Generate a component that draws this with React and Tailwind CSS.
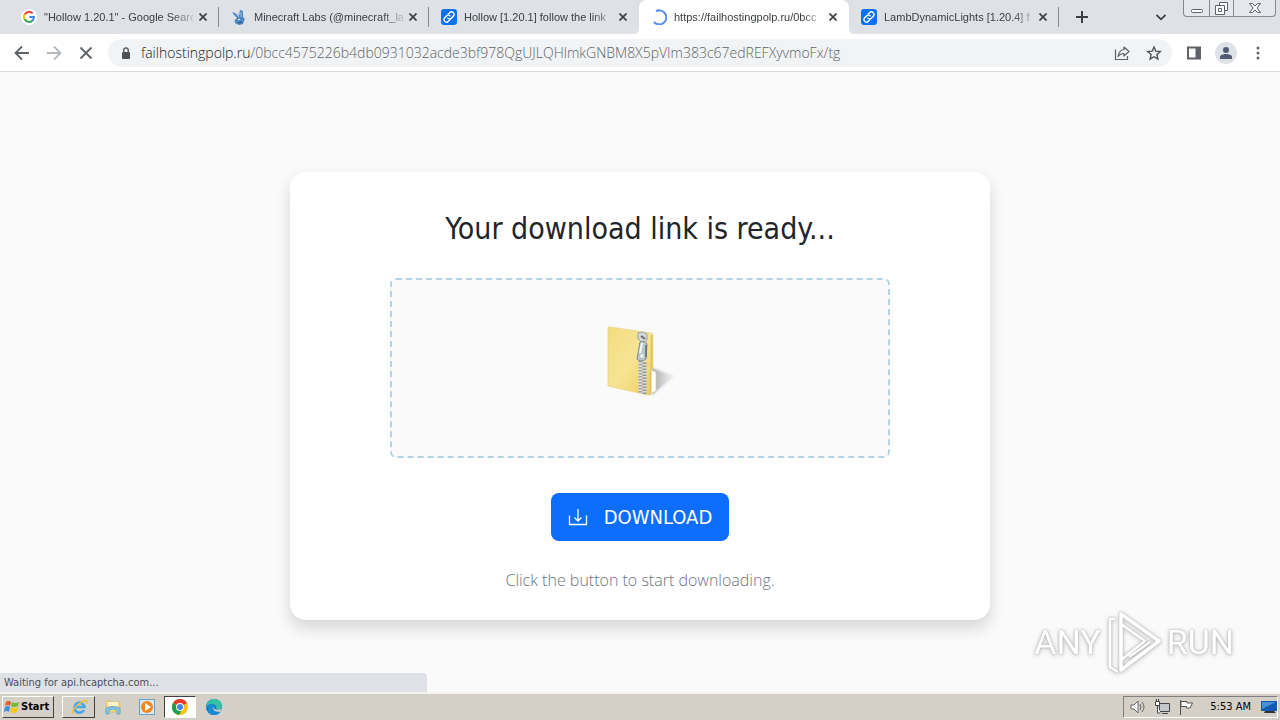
import React from "react";

function Svg({ size = 16, box = 16, children, className = "" }) {
  return (
    <svg width={size} height={size} viewBox={`0 0 ${box} ${box}`} fill="none" aria-hidden="true" className={`shrink-0 ${className}`}>
      {children}
    </svg>
  );
}

function GoogleIcon() {
  return (
    <Svg box={48}>
      <circle cx="24" cy="24" r="24" fill="#fff" />
      <path d="M11 17a15 15 0 0 1 24-4" stroke="#ea4335" strokeWidth="6" />
      <path d="M11 16a15 15 0 0 0 0 16" stroke="#fbbc05" strokeWidth="6" />
      <path d="M11 31a15 15 0 0 0 23 4" stroke="#34a853" strokeWidth="6" />
      <path d="M25 24h14c0 5-2 9-6 12" stroke="#4285f4" strokeWidth="6" />
    </Svg>
  );
}

function RabbitIcon() {
  return (
    <Svg>
      <path d="M1 3l5 2 2 2 1-6 3 1v6c2 1 2 3 1 4l-1 3-4 1-4-2c-1-2 0-4 2-5L3 6z" fill="#4c86c0" />
      <path d="M5 5l3 3M10 3l0 5" stroke="#9bc2e6" />
      <path d="M7 11l2-1" stroke="#fff" />
      <path d="M7 14l4-1" stroke="#27517f" />
    </Svg>
  );
}

function LinkIcon() {
  return (
    <Svg>
      <rect width="16" height="16" rx="3" fill="#0d72f2" />
      <g stroke="#fff" strokeWidth="1.3" strokeLinecap="round">
        <path d="M7 5.200l1.600-1.500a2.500 2.500 0 0 1 3.700 3.500L10.300 9.300a2.400 2.400 0 0 1-3.500-.2" />
        <path d="M9 10.800l-1.600 1.500a2.500 2.500 0 0 1-3.700-3.500L5.700 6.700a2.400 2.400 0 0 1 3.500.2" />
      </g>
    </Svg>
  );
}

function Spinner() {
  return (
    <Svg>
      <path d="M5 2.200A7 7 0 1 1 3 13" stroke="#5b8def" strokeWidth="2" />
    </Svg>
  );
}

function CloseIcon() {
  return (
    <Svg size={8} box={8}>
      <path d="M.5.500l7 7M7.500.500l-7 7" stroke="#3c4043" strokeWidth="1.700" />
    </Svg>
  );
}

const tabs = [
  { icon: GoogleIcon, title: '"Hollow 1.20.1" - Google Search', divider: true },
  { icon: RabbitIcon, title: "Minecraft Labs (@minecraft_la", divider: true },
  { icon: LinkIcon, title: "Hollow [1.20.1] follow the link" },
  { icon: Spinner, title: "https://failhostingpolp.ru/0bcc", active: true },
  { icon: LinkIcon, title: "LambDynamicLights [1.20.4] f", divider: true },
];

function Tab({ icon: Icon, title, active, divider }) {
  return (
    <div
      className={`relative flex h-[34px] min-w-0 max-w-[210px] flex-1 items-center pl-3 ${active ? "rounded-t-lg bg-white" : ""}`}
    >
      {active && (
        <>
          <Svg size={6} box={6} className="absolute bottom-0 right-full"><path d="M6 0v6H0q6 0 6-6z" fill="#fff" /></Svg>
          <Svg size={6} box={6} className="absolute bottom-0 left-full"><path d="M0 0v6h6q-6 0-6-6z" fill="#fff" /></Svg>
        </>
      )}
      <button type="button" role="tab" aria-selected={!!active} className="flex min-w-0 flex-1 items-center gap-[7px] text-left">
        <Icon />
        <span className="min-w-0 flex-1 overflow-hidden whitespace-nowrap font-['Liberation_Sans',sans-serif] text-[11px] leading-4 text-[#3c4043] [mask-image:linear-gradient(to_right,#000_86%,rgba(0,0,0,0.2))]">
          {title}
        </span>
      </button>
      <button type="button" aria-label={`Close ${title}`} className="ml-1 mr-[9px] p-[2px]">
        <CloseIcon />
      </button>
      <span className={`h-5 w-px ${divider ? "bg-[#85898f]" : ""}`} />
    </div>
  );
}

function WindowControls() {
  return (
    <div className="mr-1 flex h-[17px] self-start rounded-b border border-t-0 border-[#858990] bg-[#e4e7ec] text-[#5c626b]">
      <button type="button" aria-label="Minimize" className="flex w-[25px] items-center justify-center">
        <Svg size={12} box={12}><rect x=".5" y="7.500" width="11" height="3" rx="1" fill="#fff" stroke="currentColor" /></Svg>
      </button>
      <button type="button" aria-label="Restore" className="flex w-[25px] items-center justify-center border-x border-[#858990]">
        <Svg size={13} box={13}>
          <path d="M4.500.500h8v8h-8z" fill="#fff" stroke="currentColor" />
          <path d="M.5 3.500h9v9h-9z" fill="#fff" stroke="currentColor" />
          <path d="M3.500 6.500h3v3h-3z" stroke="currentColor" />
        </Svg>
      </button>
      <button type="button" aria-label="Close window" className="flex w-[41px] items-center justify-center">
        <Svg size={12} box={12}><path d="M.5 1.500h3L6 4l2.500-2.500h3L8 6l3.500 4.500h-3L6 8l-2.500 2.500h-3L4 6z" fill="#fff" stroke="currentColor" /></Svg>
      </button>
    </div>
  );
}

function TabStrip() {
  return (
    <header className="flex h-[34px] items-center bg-[#dee1e6] pl-[9px]">
      <div role="tablist" className="flex min-w-0 flex-1 items-center">
        {tabs.map((t) => (
          <Tab key={t.title} {...t} />
        ))}
        <button type="button" aria-label="New tab" className="ml-3 p-1">
          <Svg size={14} box={14}><path d="M7 1v12M1 7h12" stroke="#3c4043" strokeWidth="2" /></Svg>
        </button>
      </div>
      <button type="button" aria-label="Search tabs" className="mr-[17px]">
        <Svg size={10} box={10}><path d="M.5 3L5 7.300 9.500 3" stroke="#3c4043" strokeWidth="1.800" /></Svg>
      </button>
      <WindowControls />
    </header>
  );
}

function Toolbar() {
  return (
    <nav className="flex h-[38px] items-center border-b border-[#d9dbde] bg-white px-[14px] text-[#5f6368]">
      <div className="flex gap-4">
        <button type="button" aria-label="Back"><Svg><path d="M15 8H2M8 1.500L1.500 8 8 14.500" stroke="#5f6368" strokeWidth="1.800" /></Svg></button>
        <button type="button" aria-label="Forward"><Svg><path d="M1 8h13M8 1.500L14.500 8 8 14.500" stroke="#b5b8bb" strokeWidth="1.800" /></Svg></button>
        <button type="button" aria-label="Stop"><Svg><path d="M2.500 2.500l11 11M13.500 2.500l-11 11" stroke="#5f6368" strokeWidth="1.800" /></Svg></button>
      </div>
      <div className="ml-[14px] flex h-7 min-w-0 flex-1 items-center rounded-full bg-[#f1f3f4] pl-3 pr-[10px]">
        <Svg size={12} box={12}>
          <rect x="2" y="5" width="8" height="7" rx="1" fill="#4d5156" />
          <path d="M3.800 5V3a2.200 2.200 0 0 1 4.400 0v2" stroke="#4d5156" strokeWidth="1.300" />
        </Svg>
        <a href="#" aria-label="Address" className="ml-[9px] min-w-0 flex-1 overflow-hidden whitespace-nowrap font-['Open_Sans',sans-serif] text-[14px] font-light leading-5 text-[#5f6368]">
          <span className="text-[#202124]">failhostingpolp.ru</span>/0bcc4575226b4db0931032acde3bf978QgUJLQHlmkGNBM8X5pVIm383c67edREFXyvmoFx/tg
        </a>
        <button type="button" aria-label="Share"><Svg><path d="M1.500 4.500v10h12V11M10 2l5 4.500L10 11V8.500c-3 0-4.500.800-6 3C4.500 8 6 5 10 4.500z" stroke="#5f6368" strokeWidth="1.200" strokeLinejoin="round" /></Svg></button>
        <button type="button" aria-label="Bookmark" className="ml-4"><Svg><path d="M8 2l1.800 4.200 4.500.400-3.400 3 1 4.400L8 11.700 4.100 14l1-4.400-3.400-3 4.500-.4z" stroke="#4d5156" strokeWidth="1.400" /></Svg></button>
      </div>
      <button type="button" aria-label="Side panel" className="ml-[14px]"><Svg><path d="M2 2.500h12v11H2z" stroke="#5f6368" strokeWidth="2" /><path d="M9.500 3H14v10.500H9.500z" fill="#5f6368" /></Svg></button>
      <button type="button" aria-label="Profile" className="ml-[13px]">
        <Svg size={22} box={22}><circle cx="11" cy="11" r="11" fill="#dee1e6" /><circle cx="11" cy="8" r="3" fill="#525b73" /><path d="M5 17v-2c0-4 12-4 12 0v2z" fill="#525b73" /></Svg>
      </button>
      <button type="button" aria-label="Menu" className="ml-[13px]"><Svg><g fill="#5f6368"><circle cx="8" cy="3" r="1.500" /><circle cx="8" cy="8" r="1.500" /><circle cx="8" cy="13" r="1.500" /></g></Svg></button>
    </nav>
  );
}

function ZipFolder() {
  return (
    <svg width="72" height="74" viewBox="0 0 72 74" aria-label="Zip archive" role="img">
      <defs>
        <linearGradient id="folder" x1="0" y1="0" x2="1" y2="1">
          <stop offset="0" stopColor="#f3dc80" /><stop offset=".5" stopColor="#f7e493" /><stop offset="1" stopColor="#ebcd60" />
        </linearGradient>
        <linearGradient id="shade" x1="0" y1="0" x2="1" y2="0">
          <stop offset="0" stopColor="#888" stopOpacity=".8" /><stop offset="1" stopColor="#ddd" stopOpacity=".3" />
        </linearGradient>
        <filter id="soft"><feGaussianBlur stdDeviation="1" /></filter>
      </defs>
      <path d="M48 43l23 8-16 13-7 6z" fill="url(#shade)" filter="url(#soft)" />
      <path d="M46 45l6 2v19l-6 3z" fill="#fff" stroke="#d8d2ae" strokeWidth=".7" />
      <path d="M4 3q0-1 2-1l41 6q2 0 2 2v33l-2 2v23q0 3-3 2L4 61z" fill="url(#folder)" stroke="#e6d080" strokeWidth=".7" />
      <path d="M47.500 10v35M46.500 46v22" stroke="#dfbf50" strokeWidth="1.500" />
      <path d="M38.500 36v33" stroke="#e2dfd0" strokeWidth="8" />
      <path d="M36.500 36v32" stroke="#a3a6a8" strokeWidth="4" strokeDasharray="1.500 1.500" />
      <path d="M40.500 37.500v32" stroke="#92969a" strokeWidth="4" strokeDasharray="1.500 1.500" />
      <path d="M34 8l4-1 5 2v6l-4 3-5-4z" fill="#d2d7da" stroke="#9aa4a9" />
      <path d="M37 11l4 3" stroke="#667178" strokeWidth="2" />
      <path d="M36 17q5-2 7 2l-1 15q-5 4-9 0z" fill="#b9c5cc" stroke="#7f8e96" />
      <path d="M38 18l-2 10" stroke="#f5f9fb" strokeWidth="2" />
      <path d="M42 20v12" stroke="#5b6a72" strokeWidth="1.500" />
      <circle cx="38" cy="31" r="2" fill="#e8edef" />
    </svg>
  );
}

function Watermark() {
  return (
    <div aria-label="ANY.RUN" className="absolute bottom-[17px] right-[46px] flex items-center gap-1 font-['Roboto',sans-serif] text-[34px] leading-[66px] text-white [filter:drop-shadow(0_0_1px_#aaa)_drop-shadow(0_1px_2px_#ccc)]">
      <span>ANY</span>
      <svg width="58" height="64" viewBox="0 0 58 64" fill="none" aria-hidden="true">
        <path d="M16 4l38 27-38 29z" stroke="#fff" strokeWidth="3.500" strokeLinejoin="round" />
        <path d="M16 14l24 17-24 19zM10 9H5v48l8 5M24 47l21-15M22 54l24-17" stroke="#fff" strokeWidth="2.500" strokeLinejoin="round" />
      </svg>
      <span>RUN</span>
    </div>
  );
}

function Page() {
  return (
    <main className="relative flex flex-1 flex-col items-center bg-[#fafafa] px-4 pt-[100px] pb-[72px]">
      <section className="flex w-full max-w-[700px] flex-col items-center rounded-2xl bg-white px-4 pb-7 pt-[37px] shadow-[0_8px_16px_rgba(0,0,0,0.15)]">
        <h1 className="text-[30px] leading-[40px] text-[#212529]">Your download link is ready...</h1>
        <div className="mt-[29px] flex h-[180px] w-full max-w-[500px] items-start justify-center rounded-md border-2 border-dashed border-[#b5d4e3] bg-[#fafafa] pt-[45px]">
          <ZipFolder />
        </div>
        <button type="button" className="mt-[35px] flex h-12 items-center gap-4 rounded-lg bg-[#0d6efd] px-[17px] text-[20px] leading-[30px] text-white">
          <Svg size={20} box={20}><path d="M1.500 8.500v9h17v-9M10 2v12M6.500 10.500L10 14l3.500-3.500" stroke="#fff" strokeWidth="1.300" /></Svg>
          DOWNLOAD
        </button>
        <p className="mt-[27px] font-['Open_Sans',sans-serif] text-[16px] font-light leading-6 text-[#6c757d]">Click the button to start downloading.</p>
      </section>
      <Watermark />
      <div role="status" className="absolute bottom-0 left-0 h-[19px] w-1/3 rounded-tr bg-[#dee1e6] pl-1 text-[11px] leading-[20px] text-[#4b4f54]">
        Waiting for api.hcaptcha.com...
      </div>
    </main>
  );
}

function Taskbar() {
  const raised = "border border-b-[#404040] border-l-white border-r-[#404040] border-t-white";
  return (
    <footer className="flex h-7 items-center border-t-2 border-[#f4f2ee] bg-[#d4d0c8] px-[2px] text-[11px] text-black">
      <button type="button" className={`flex h-[22px] items-center gap-px pl-px pr-1 text-[11px] font-bold ${raised}`}>
        <Svg>
          <path d="M2 3q3-2 5 0L6 7Q4 5 1 7z" fill="#e65b26" /><path d="M8 3q3 2 7 0l-1 4q-4 2-7 0z" fill="#75b935" />
          <path d="M1 8q3-2 5 0l-1 5q-2-2-5 0z" fill="#3c91d8" /><path d="M7 8q3 2 7 0l-1 5q-4 2-7 0z" fill="#f5c522" />
        </Svg>
        Start
      </button>
      <div className="ml-2 flex h-[22px] items-center gap-px">
        <button type="button" aria-label="Internet Explorer" className={`flex h-[22px] w-[33px] items-center justify-center ${raised}`}>
          <Svg size={18} box={18}>
            <path d="M14 12A5 5 0 1 1 14.500 9H5" stroke="#46a9e6" strokeWidth="2.600" />
            <path d="M3 16C-1 13 14 0 17 3c.5 1 0 2-1 3" stroke="#efbd38" strokeWidth="1.500" />
          </Svg>
        </button>
        <button type="button" aria-label="Explorer" className="flex h-[22px] w-[33px] items-center justify-center">
          <Svg size={18} box={18}><path d="M2 3h5l1 1h8v10H2z" fill="#f2d98a" stroke="#dcbd68" /><path d="M4 4h10v4H4z" fill="#fff4c5" /><path d="M2 10q7-3 14 0v6h-3v-4q-4-2-8 0v4H2z" fill="#85c8e9" stroke="#65a9cb" /></Svg>
        </button>
        <button type="button" aria-label="Media Player" className="flex h-[22px] w-[33px] items-center justify-center">
          <Svg><rect x=".5" y=".5" width="15" height="15" fill="#d9e9f7" stroke="#6c9fc9" /><circle cx="8" cy="8" r="6" fill="#ed8a1c" /><path d="M6 4l6 4-6 4z" fill="#fff" /></Svg>
        </button>
        <button type="button" aria-label="Chrome" className="flex h-[22px] w-8 items-center justify-center border border-b-white border-l-[#404040] border-r-white border-t-[#404040] bg-white">
          <Svg><circle cx="8" cy="8" r="8" fill="#fbc116" /><path d="M8 8L1 4a8 8 0 0 1 14 0z" fill="#e33b2e" /><path d="M8 8L1 4a8 8 0 0 0 6 12l4-7z" fill="#229d4b" /><circle cx="8" cy="8" r="4" fill="#fff" /><circle cx="8" cy="8" r="3" fill="#4285f4" /></Svg>
        </button>
        <button type="button" aria-label="Edge" className="flex h-[22px] w-[34px] items-center justify-center">
          <Svg><circle cx="8" cy="8" r="8" fill="#1674bf" /><path d="M0 8C1-3 16-2 16 7c0 3-4 4-6 3 2-4-5-8-10-2z" fill="#35c1a8" /><path d="M0 8c4-5 9-3 8 0-1 2 0 5 6 5-2 4-9 4-11 1-2-2-1-5 1-6-2 0-3 1-4 2z" fill="#168cd4" /><path d="M8 8c-2 2 0 5 6 5l2-4c-2 2-8 3-8-1z" fill="#d4d0c8" /></Svg>
        </button>
      </div>
      <div className="ml-auto flex h-[22px] items-center border border-b-white border-l-[#808080] border-r-white border-t-[#808080] pl-[6px]">
        <div className="flex items-center gap-2">
          <Svg><path d="M1 6h3l4-4v12l-4-4H1z" fill="#fff" stroke="#666" /><path d="M10 5q2 3 0 6M12 3q4 5 0 10" stroke="#666" /></Svg>
          <Svg><path d="M5.500 4.500h10v8h-10z" fill="#c5c8ca" stroke="#444" /><path d="M8 14.500h6M1.500 2.500h4v4h-4zM2.500 0v2M4.500 0v2M3.500 7v7h3" fill="#fff" stroke="#444" /></Svg>
          <Svg><path d="M2.500 1v15M3 2.500h6v1.500h5.500L12 9H8.500V7.500H3z" fill="#fff" stroke="#555" /></Svg>
        </div>
        <time className="ml-4">5:53 AM</time>
        <Svg className="ml-[10px]"><path d="M0 2h16v10H0z" fill="#1459b3" /><path d="M1 3h14L1 10z" fill="#4a91dc" /><path d="M4 12h9l2 2H3z" fill="#333" /></Svg>
      </div>
    </footer>
  );
}

export default function App() {
  return (
    <div className="flex min-h-screen flex-col font-['DejaVu_Sans_Condensed','DejaVu_Sans','Noto_Sans',sans-serif]">
      <TabStrip />
      <Toolbar />
      <Page />
      <Taskbar />
    </div>
  );
}
